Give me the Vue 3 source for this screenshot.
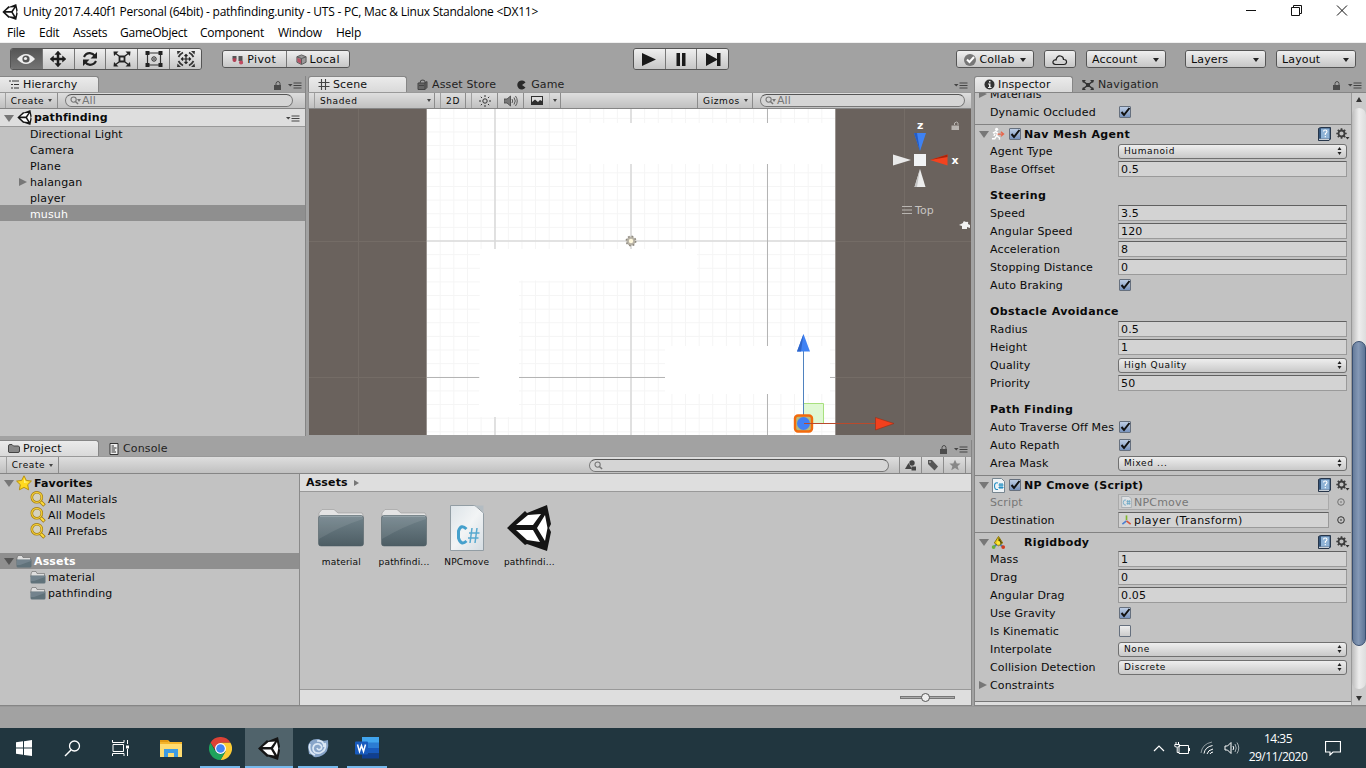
<script setup>
const menus = ['File', 'Edit', 'Assets', 'GameObject', 'Component', 'Window', 'Help']
const tools = ['eye', 'move', 'rotate', 'scale', 'rect', 'multi']
const playback = ['play', 'pause', 'step']
const hierarchy = [
  { name: 'Directional Light' },
  { name: 'Camera' },
  { name: 'Plane' },
  { name: 'halangan', expandable: true },
  { name: 'player' },
  { name: 'musuh', selected: true },
]
const favorites = ['All Materials', 'All Models', 'All Prefabs']
const folders = ['material', 'pathfinding']
const assets = [
  { name: 'material', icon: 'folder-big' },
  { name: 'pathfindi...', icon: 'folder-big' },
  { name: 'NPCmove', icon: 'cs-big' },
  { name: 'pathfindi...', icon: 'unity' },
]
const components = [
  {
    title: 'Nav Mesh Agent', icon: 'agent', check: true,
    rows: [
      { label: 'Agent Type', type: 'popup', value: 'Humanoid' },
      { label: 'Base Offset', type: 'text', value: '0.5' },
      { label: 'Steering', type: 'heading' },
      { label: 'Speed', type: 'text', value: '3.5' },
      { label: 'Angular Speed', type: 'text', value: '120' },
      { label: 'Acceleration', type: 'text', value: '8' },
      { label: 'Stopping Distance', type: 'text', value: '0' },
      { label: 'Auto Braking', type: 'check', value: true },
      { label: 'Obstacle Avoidance', type: 'heading' },
      { label: 'Radius', type: 'text', value: '0.5' },
      { label: 'Height', type: 'text', value: '1' },
      { label: 'Quality', type: 'popup', value: 'High Quality' },
      { label: 'Priority', type: 'text', value: '50' },
      { label: 'Path Finding', type: 'heading' },
      { label: 'Auto Traverse Off Mes', type: 'check', value: true },
      { label: 'Auto Repath', type: 'check', value: true },
      { label: 'Area Mask', type: 'popup', value: 'Mixed ...' },
    ],
  },
  {
    title: 'NP Cmove (Script)', icon: 'cs', check: true,
    rows: [
      { label: 'Script', type: 'object', value: 'NPCmove', icon: 'cs', disabled: true },
      { label: 'Destination', type: 'object', value: 'player (Transform)', icon: 'axes' },
    ],
  },
  {
    title: 'Rigidbody', icon: 'rigid', check: false,
    rows: [
      { label: 'Mass', type: 'text', value: '1' },
      { label: 'Drag', type: 'text', value: '0' },
      { label: 'Angular Drag', type: 'text', value: '0.05' },
      { label: 'Use Gravity', type: 'check', value: true },
      { label: 'Is Kinematic', type: 'check', value: false },
      { label: 'Interpolate', type: 'popup', value: 'None' },
      { label: 'Collision Detection', type: 'popup', value: 'Discrete' },
      { label: 'Constraints', type: 'foldout' },
    ],
  },
]
const gridStep = 13.63
const gridX = Array.from({ length: 30 }, (_, i) => 631 + (i - 14) * gridStep).filter((x) => x > 428 && x < 835)
const gridY = Array.from({ length: 24 }, (_, i) => 241 + (i - 9) * gridStep).filter((y) => y > 109 && y < 434)
</script>

<template>
  <div class="screen">
    <svg class="defs" width="0" height="0">
      <symbol id="unity" viewBox="0 0 44 46">
        <path d="M0 23 18 6 20 8 40 0 44 19 42 23 44 27 40 46 20 39 18 40Z" fill="#151515" />
        <path d="M9 20 21 10 34 9 26 20ZM9 25 26 25 33 37 20 35ZM38 10 40.500 23 38 36 30 23Z" fill="#fff" />
      </symbol>
      <symbol id="eye" viewBox="0 0 20 16">
        <path d="M1 8Q10-2 19 8Q10 18 1 8Z" fill="#eee" /><circle cx="10" cy="8" r="3.600" fill="#555" /><circle cx="9.500" cy="7.500" r="1.600" fill="#eee" />
      </symbol>
      <symbol id="move" viewBox="0 0 20 16">
        <path d="M10 0 13 3.500H11V7H14.500V5L18 8 14.500 11V9H11V12.500H13L10 16 7 12.500H9V9H5.500V11L2 8 5.500 5V7H9V3.500H7Z" fill="#1c1c1c" stroke="#1c1c1c" stroke-width=".5" />
      </symbol>
      <symbol id="rotate" viewBox="0 0 20 16">
        <path d="M4 6Q6 2 10 2.200 13 2.400 15 5M16 10Q14 13.800 10 13.800 7 13.600 5 11" fill="none" stroke="#222" stroke-width="2.200" /><path d="M17 1V7.500H10.500ZM3 15V8.500H9.500Z" fill="#222" />
      </symbol>
      <symbol id="scale" viewBox="0 0 20 16">
        <path d="M7.500 5.500H12.500V10.500H7.500Z" fill="none" stroke="#222" stroke-width="1.800" /><path d="M3 2 7 5M17 2 13 5M3 14 7 11M17 14 13 11" stroke="#222" stroke-width="1.300" />
        <path d="M1.500.500H6.500L2 5ZM18.500.500H13.500L18 5ZM1.500 15.500H6.500L2 11ZM18.500 15.500H13.500L18 11Z" fill="#222" />
      </symbol>
      <symbol id="rect" viewBox="0 0 20 16">
        <path d="M3.500 2H16.500V14H3.500Z" fill="none" stroke="#333" stroke-width="1.200" /><path d="M1.500 0h4v4h-4zM14.500 0h4v4h-4zM1.500 12h4v4h-4zM14.500 12h4v4h-4z" fill="#222" /><circle cx="10" cy="8" r="2.200" fill="none" stroke="#222" /><circle cx="10" cy="8" r=".8" />
      </symbol>
      <symbol id="multi" viewBox="0 0 20 16">
        <path d="M2.500 6Q4 3 7 1.500M13 1.500Q16 3 17.500 6M17.500 10Q16 13 13 14.500M7 14.500Q4 13 2.500 10" fill="none" stroke="#333" stroke-width="1.700" />
        <path d="M1 0h4L1.500 3.500zM19 0h-4L18.500 3.500zM1 16h4L1.500 12.500zM19 16h-4L18.500 12.500z" fill="#333" />
        <path d="M10 3.500V12.500M5.500 8H14.500M8.500 5 10 3.500 11.500 5M8.500 11 10 12.500 11.500 11M7 6.500 5.500 8 7 9.500M13 6.500 14.500 8 13 9.500" fill="none" stroke="#222" stroke-width="1.200" />
      </symbol>
      <symbol id="play" viewBox="0 0 20 16"><path d="M3 2V15L17 8.500Z" fill="#1a1a1a" /></symbol>
      <symbol id="pause" viewBox="0 0 20 16"><path d="M5.500 2H9V15H5.500ZM11 2H14.500V15H11Z" fill="#1a1a1a" /></symbol>
      <symbol id="step" viewBox="0 0 20 16"><path d="M3 2V15L14 9V15H17.500V2H14V8Z" fill="#1a1a1a" /></symbol>
      <symbol id="pivot" viewBox="0 0 12 10">
        <path d="M.500 1H4.500V4L2.500 7 .500 4Z" fill="#555" /><circle cx="2.500" cy="5" r="2" fill="#b34055" /><path d="M6.500 1H10.500V9H8V6H6.500Z" fill="#555" /><circle cx="9" cy="7.500" r="2" fill="#c34a60" />
      </symbol>
      <symbol id="cube" viewBox="0 0 12 12">
        <path d="M1 3 6 1 11 3V9L6 11.500 1 9Z" fill="#999" stroke="#555" /><path d="M1 3 6 5 11 3M6 5V11" fill="none" stroke="#555" /><path d="M1.500 4 5.500 6V10.500L1.500 8.500Z" fill="#b85265" />
      </symbol>
      <symbol id="lock" viewBox="0 0 8 9"><path d="M0 4H7V9H0Z" fill="#4b4b4b" /><path d="M2 4V2.500Q2.300.500 4 .500T6 2.500V4" fill="none" stroke="#4b4b4b" /></symbol>
      <symbol id="menu" viewBox="0 0 14 7"><path d="M0 2H4.500L2.250 4.500Z" fill="#444" /><path d="M5.500 1H13.500M5.500 3.500H13.500M5.500 6H13.500" stroke="#444" /></symbol>
      <symbol id="list" viewBox="0 0 12 9"><path d="M1 1H3M4 1H11M3 4.500H5M6 4.500H11M3 8H5M6 8H11" stroke="#333" stroke-width="1.100" /></symbol>
      <symbol id="hash" viewBox="0 0 12 11"><path d="M3.500 0V11M7.500 0V11M.500 3.500H11.500M.500 7.500H11.500" stroke="#444" stroke-width="1.100" /></symbol>
      <symbol id="bag" viewBox="0 0 12 11"><path d="M1 4H8V10.500H1ZM8 4 10 2.500V8.500L8 10.500" fill="#666" stroke="#444" /><path d="M3 4Q3 .500 6 1T8 4M2 6.500H7" fill="none" stroke="#444" /></symbol>
      <symbol id="pac" viewBox="0 0 10 10"><path d="M8.500 2.500 5 5 8.500 7.500A4.500 4.500 0 1 1 8.500 2.500Z" fill="#2a2a2a" /></symbol>
      <symbol id="info" viewBox="0 0 11 11"><circle cx="5.500" cy="5.500" r="5" fill="#333" /><path d="M5 2H6.500V3.500H5ZM4 4.500H6.500V8H7.500V9H4V8H5V5.500H4Z" fill="#eee" /></symbol>
      <symbol id="nav" viewBox="0 0 12 10"><path d="M1 1 11 9M11 1 1 9" stroke="#333" stroke-width="1.600" /><path d="M0 0H4L1 3ZM12 0H8L11 3ZM0 10H4L1 7ZM12 10H8L11 7ZM4 3H8V7H4Z" fill="#333" /></symbol>
      <symbol id="folder-tab" viewBox="0 0 12 9"><path d="M.500 8V2Q.500.500 2 .500H4L5.500 2H10Q11 2 11.500 3V7Q11.500 8.500 10 8.500H1Z" fill="#888" stroke="#444" /></symbol>
      <symbol id="doc-tab" viewBox="0 0 10 12"><path d="M1 .500H9V11.500H1Z" fill="#eee" stroke="#333" /><path d="M2.500 3H5M2.500 5H7.500M2.500 7H6M2.500 9H7" stroke="#333" /></symbol>
      <symbol id="search" viewBox="0 0 10 10"><circle cx="4" cy="4" r="2.900" fill="none" stroke="#777" stroke-width="1.200" /><path d="M6 6 9 9" stroke="#777" stroke-width="1.600" /></symbol>
      <symbol id="sun" viewBox="0 0 12 12"><circle cx="6" cy="6" r="2.200" fill="none" stroke="#333" /><path d="M6 0V2M6 10V12M0 6H2M10 6H12M1.800 1.800 3 3M9 9 10.200 10.200M1.800 10.200 3 9M9 3 10.200 1.800" stroke="#333" /></symbol>
      <symbol id="sound" viewBox="0 0 14 12"><path d="M0 4H3L6.500 1V11L3 8H0Z" fill="#777" stroke="#444" stroke-width=".8" /><path d="M8 4Q9.500 6 8 8M10 2.500Q12.500 6 10 9.500M11.500 1Q15 6 11.500 11" fill="none" stroke="#555" /></symbol>
      <symbol id="image" viewBox="0 0 12 9"><path d="M0 0H12V9H0Z" fill="#2f2f2f" /><path d="M1 1H11V5L9 4 7 6 4 3.500 1 6Z" fill="#ddd" /></symbol>
      <symbol id="star" viewBox="0 0 16 16"><path d="M8 .800 10.300 5.400 15.400 6.100 11.700 9.700 12.600 14.800 8 12.400 3.400 14.800 4.300 9.700 .600 6.100 5.700 5.400Z" fill="#ffd91f" stroke="#b58a00" stroke-width=".9" /><path d="M8 3 9.500 6.500 13 7 8 8Z" fill="#fff27c" /></symbol>
      <symbol id="lens" viewBox="0 0 16 16"><path d="M10 10 14.500 14.500" stroke="#a07a10" stroke-width="3.600" /><path d="M10 10 14 14" stroke="#ffdc3c" stroke-width="2" /><circle cx="6.800" cy="6.300" r="5" fill="#d5d2bf" stroke="#a07a10" stroke-width="2.600" /><circle cx="6.800" cy="6.300" r="5" fill="none" stroke="#f2cd35" stroke-width="1.300" /></symbol>
      <symbol id="folder" viewBox="0 0 16 13">
        <path d="M1 3 2 .500H6L7 2.500H14.500V6H1Z" fill="#dedede" stroke="#666" stroke-width=".6" /><path d="M.500 4.500H15.500V11Q15.500 12.500 14 12.500H2Q.500 12.500.500 11Z" fill="#60727a" /><path d="M1 5H15V6L4 10H1Z" fill="#80909a" opacity=".6" />
      </symbol>
      <linearGradient id="fold" x1="0" y1="0" x2="0" y2="1"><stop offset="0" stop-color="#71838b" /><stop offset="1" stop-color="#4d5d64" /></linearGradient>
      <symbol id="folder-big" viewBox="0 0 46 46">
        <path d="M1 13V8L4 4.500H16L20 8H44L45 10V14Z" fill="#e4e4e4" stroke="#999" stroke-width=".6" /><rect x=".500" y="10.500" width="45" height="30.500" rx="2.500" fill="url(#fold)" stroke="#4b5a60" stroke-width=".5" /><path d="M1 15V13Q1 11 3 11H45V14Q23 21 1 34Z" fill="#fff" opacity=".09" /><path d="M2 11.500H44" stroke="#94a2a8" />
      </symbol>
      <linearGradient id="paper" x1="0" y1="0" x2="1" y2="1"><stop offset="0" stop-color="#dce3e8" /><stop offset=".5" stop-color="#f2f4f5" /><stop offset="1" stop-color="#d4dce2" /></linearGradient>
      <symbol id="cs-big" viewBox="0 0 46 46">
        <path d="M6.500 .500H31L39.500 8V45.500H6.500Z" fill="url(#paper)" stroke="#929da4" /><path d="M29 .500Q36 2 39.500 9V.500Z" fill="#b3bcc2" />
        <path d="M22.500 24Q17 18.500 14.500 26V33Q17 41 22.500 36" fill="none" stroke="#45a0cc" stroke-width="3" /><path d="M28 23 26 38M33 23 31 38M25 28H35.500M24 33H34.500" stroke="#58a9cf" stroke-width="1.500" />
      </symbol>
      <symbol id="cs" viewBox="0 0 13 15"><path d="M.500 .500H9.500L12.500 3.500V14.500H.500Z" fill="#eef3f6" stroke="#778690" /><path d="M6 5Q2.500 4 2.500 8T6 11.500M8 5V11M10 5V11M6.500 7H11.500M6.500 9.500H11.500" fill="none" stroke="#258fc4" stroke-width="1.100" /></symbol>
      <symbol id="agent" viewBox="0 0 16 15"><circle cx="6" cy="2" r="1.700" fill="#fff" /><path d="M2 6 5 4.500 7 6 6 9 9 11V13M6 9 4 12H1M4.500 6.500 3 9" fill="none" stroke="#fff" stroke-width="1.500" /><path d="M7 7H13M10.500 4.500 13.500 7 10.500 9.500" fill="none" stroke="#e8654a" stroke-width="1.300" /></symbol>
      <symbol id="rigid" viewBox="0 0 16 15"><path d="M3 12 8 8 12.500 12" fill="none" stroke="#4a7fb8" stroke-width="2" /><path d="M8 1 12.500 8 8 11 3.500 8Z" fill="#e8ca1c" stroke="#87740c" /><path d="M8 2V10L12 8Z" fill="#51470a" /><circle cx="8" cy="8" r="2" fill="#ffe838" /><circle cx="2.800" cy="12.300" r="2" fill="#6bb03a" /><circle cx="13" cy="12.300" r="2" fill="#d23b20" /></symbol>
      <symbol id="axes" viewBox="0 0 12 12"><path d="M6 6V1" stroke="#7fb52c" stroke-width="1.800" /><path d="M6 7 1.500 10.500" stroke="#4b7fd0" stroke-width="1.800" /><path d="M6 7 10.500 10.500" stroke="#d9553c" stroke-width="1.800" /></symbol>
      <symbol id="book" viewBox="0 0 13 14"><path d="M.500 1.500 2.500.500H12.500V12L11 13.500H.500Z" fill="#34557b" stroke="#27364a" /><path d="M3 1.500H11.500V11.500H3Z" fill="#8fb3d6" /><path d="M5.500 4.500Q5.500 3 7.200 3T9 4.600Q9 5.500 7.300 6.800V8M7.300 9V10.300" fill="none" stroke="#fff" stroke-width="1.100" /><path d="M1 12.300H11" stroke="#eee" /></symbol>
      <symbol id="gear" viewBox="0 0 14 13"><circle cx="5.500" cy="5.500" r="3" fill="none" stroke="#3d3d3d" stroke-width="1.800" /><path d="M5.500 .300V2.500M5.500 8.500V10.700M.300 5.500H2.500M8.500 5.500H10.700M1.800 1.800 3.300 3.300M7.700 7.700 9.200 9.200M1.800 9.200 3.300 7.700M7.700 3.300 9.200 1.800" stroke="#3d3d3d" stroke-width="1.700" /><path d="M9.500 9H13.500L11.500 11.500Z" fill="#333" /></symbol>
    </svg>

    <header class="titlebar">
      <div class="title-row">
        <svg class="logo"><use href="#unity" /></svg>
        <span class="window-title">Unity 2017.4.40f1 Personal (64bit) - pathfinding.unity - UTS - PC, Mac &amp; Linux Standalone &lt;DX11&gt;</span>
        <svg class="window-buttons" width="104" height="14" viewBox="0 0 104 14" fill="none" stroke="#111">
          <path d="M0 7.500H10M45.500 4.500H53.500V12.500H45.500ZM47.500 4V2.500H55.500V10.500H54M91 2.500 101 12.500M101 2.500 91 12.500" />
        </svg>
      </div>
      <nav class="menu-row"><span v-for="m in menus" :key="m" :class="'m-' + m.toLowerCase()">{{ m }}</span></nav>
    </header>

    <div class="main-toolbar">
      <div class="group tools">
        <span v-for="t in tools" :key="t" class="btn" :class="{ active: t === 'eye' }"><svg width="20" height="16"><use :href="'#' + t" /></svg></span>
      </div>
      <div class="group short pivot">
        <span class="btn"><svg width="12" height="10"><use href="#pivot" /></svg>Pivot</span>
        <span class="btn"><svg width="11" height="11"><use href="#cube" /></svg>Local</span>
      </div>
      <div class="group playback">
        <span v-for="p in playback" :key="p" class="btn"><svg width="20" height="16"><use :href="'#' + p" /></svg></span>
      </div>
      <div class="group short collab"><span class="btn"><svg width="12" height="12" viewBox="0 0 12 12"><circle cx="6" cy="6" r="6" fill="#777" /><path d="M3 5.500 5.500 8 10 3" fill="none" stroke="#fff" stroke-width="2" /></svg>Collab<i class="arrow"></i></span></div>
      <div class="group short cloud"><span class="btn"><svg width="16" height="12" viewBox="0 0 16 12"><path d="M3.500 10.500Q.500 10 1 7.500 2 5.500 4 6 5 1.500 8.500 2 11.500 2.500 11.500 5.500 15 5.500 14.500 8.500 14 10.500 12 10.500Z" fill="none" stroke="#222" stroke-width="1.200" /></svg></span></div>
      <div class="group short account"><span class="btn wide">Account<i class="arrow"></i></span></div>
      <div class="group short layers"><span class="btn wide">Layers<i class="arrow"></i></span></div>
      <div class="group short layout"><span class="btn wide">Layout<i class="arrow"></i></span></div>
    </div>

    <main class="workspace">
      <div class="left">
        <div class="upper">
          <section class="panel hierarchy">
            <div class="tabs">
              <span class="tab on first"><svg width="12" height="9"><use href="#list" /></svg>Hierarchy</span>
              <span class="tab-tools"><svg width="8" height="9"><use href="#lock" /></svg><svg width="14" height="7"><use href="#menu" /></svg></span>
            </div>
            <div class="bar">
              <span class="bar-btn create">Create<i class="arrow tiny"></i></span>
              <span class="search hsearch"><svg width="9" height="9"><use href="#search" /></svg><i class="arrow tiny"></i>All</span>
            </div>
            <div class="scene-row"><i class="tri down"></i><svg width="15" height="15"><use href="#unity" /></svg><b>pathfinding</b><svg class="row-menu" width="14" height="7"><use href="#menu" /></svg></div>
            <div class="tree">
              <div v-for="h in hierarchy" :key="h.name" class="node" :class="{ selected: h.selected }"><i v-if="h.expandable" class="tri right"></i><span class="name">{{ h.name }}</span></div>
            </div>
          </section>

          <section class="panel scene">
            <div class="tabs">
              <span class="tab on"><svg width="12" height="11"><use href="#hash" /></svg>Scene</span>
              <span class="tab store"><svg width="12" height="11"><use href="#bag" /></svg>Asset Store</span>
              <span class="tab game"><svg width="10" height="10"><use href="#pac" /></svg>Game</span>
              <span class="tab-tools"><svg width="14" height="7"><use href="#menu" /></svg></span>
            </div>
            <div class="bar scene-bar">
              <span class="bar-btn shaded">Shaded<i class="arrow tiny"></i></span>
              <span class="bar-btn two-d">2D</span>
              <span class="bar-btn ico light"><svg width="12" height="12"><use href="#sun" /></svg></span>
              <span class="bar-btn ico"><svg width="14" height="12"><use href="#sound" /></svg></span>
              <span class="bar-btn ico"><svg width="12" height="9"><use href="#image" /></svg></span>
              <span class="bar-btn more"><i class="arrow tiny"></i></span>
              <span class="bar-btn gizmos">Gizmos<i class="arrow tiny"></i></span>
              <span class="search ssearch"><svg width="9" height="9"><use href="#search" /></svg><i class="arrow tiny"></i>All</span>
            </div>
            <svg class="view" width="662" height="326" viewBox="309 109 662 326">
              <rect x="309" y="109" width="662" height="326" fill="#6a625d" />
              <path d="M358.500 109V435M904.500 109V435M309 241.500H971M309 377.500H971" stroke="#746c66" />
              <rect x="427" y="109" width="408" height="326" fill="#fff" />
              <g stroke="#f5f5f5"><line v-for="x in gridX" :key="'x' + x" :x1="x" :x2="x" y1="109" y2="435" /><line v-for="y in gridY" :key="'y' + y" x1="427" x2="835" :y1="y" :y2="y" /></g>
              <path d="M495 109V435M631 109V435M427 241H835" stroke="#dadada" stroke-width="1.600" />
              <path d="M767.500 109V435M427 377.500H835" stroke="#b4b4b4" />
              <path d="M577 123H835V164H577ZM480 249H697V280.500H519V417H479ZM665 346H830V394H665Z" fill="#fff" />
              <path d="M426.500 109V435M835.500 109V435" stroke="#99938f" />
              <g><circle cx="631" cy="241" r="4.500" fill="#b8b3a7" /><circle cx="631" cy="241" r="4.700" fill="none" stroke="#8f8a80" stroke-width="1.500" stroke-dasharray="1.800 1.890" /><circle cx="631" cy="241" r="2.200" fill="#fff8dc" /></g>
              <path d="M803.500 423.500V403.500H823.500V423.500Z" fill="#dff8d3" stroke="#a8e07e" />
              <path d="M803.500 418V351" stroke="#4f82bf" />
              <path d="M797 351.500 803.500 334 810 351.500Z" fill="#3f82f4" /><path d="M797 351.500 803.500 334 801 351.500Z" fill="#2d64c9" />
              <rect x="795" y="415.500" width="17" height="16" rx="3" fill="#b8b779" stroke="#f26a0c" stroke-width="2.400" /><circle cx="803.500" cy="423.500" r="6.500" fill="#4280f3" />
              <path d="M804 423.500H876" stroke="#b94a2c" /><path d="M875.500 417.500 894 423.500 875.500 430Z" fill="#f3401d" stroke="#9c2b13" stroke-width=".6" />
              <g><path d="M914 133H926L920 151Z" fill="#3e82f3" /><path d="M914 133H917L920 151Z" fill="#235bc4" /><path d="M893 154.500V165.500L911 160Z" fill="#e9e9e9" /><path d="M947.500 154.500V165.500L930 160Z" fill="#f3431f" /><path d="M947.500 154.500V157L930 160Z" fill="#a9250c" /><path d="M914.500 187H925.500L920 169Z" fill="#ececec" /><path d="M914.500 187H917L920 169Z" fill="#c4c4c4" /><rect x="914" y="154" width="12" height="12" fill="#f1f3f5" /></g>
              <text x="917" y="128.500" class="axis">z</text><text x="951.500" y="163.500" class="axis">x</text>
              <path d="M951.500 125.500H959V130H951.500Z" fill="#b8b4b0" /><path d="M954.500 125V123Q957 121 958 123V125" fill="none" stroke="#b8b4b0" />
              <path d="M902 206.500H912M902 210H912M902 213.500H912" stroke="#b9b5b1" /><text x="915" y="214" class="top-label">Top</text>
              <path d="M959 225 963 223Q963 220 966 222 969 221 968 224L970 225V228L967 227V229H962V226Z" fill="#f2f2f2" />
            </svg>
          </section>
        </div>

        <section class="panel project">
          <div class="tabs">
            <span class="tab on first proj"><svg width="12" height="9"><use href="#folder-tab" /></svg>Project</span>
            <span class="tab console"><svg width="10" height="12"><use href="#doc-tab" /></svg>Console</span>
            <span class="tab-tools"><svg width="8" height="9"><use href="#lock" /></svg><svg width="14" height="7"><use href="#menu" /></svg></span>
          </div>
          <div class="bar project-bar">
            <span class="bar-btn create">Create<i class="arrow tiny"></i></span>
            <span class="search psearch"><svg width="9" height="9"><use href="#search" /></svg></span>
            <span class="filter"><svg width="11" height="11" viewBox="0 0 11 11"><path d="M0 9 3.500 3 7 9Z" fill="#444" /><circle cx="7" cy="3" r="2.700" fill="#444" /><path d="M6.500 6.500H11V10.500H6.500Z" fill="#444" /></svg></span>
            <span class="filter"><svg width="12" height="12" viewBox="0 0 12 12"><path d="M1 1H5L11 7.500 7.500 11.500 1 5Z" fill="#555" /><circle cx="3" cy="3" r=".8" fill="#ddd" /></svg></span>
            <span class="filter"><svg width="12" height="12" viewBox="0 0 16 16"><path d="M8 1 10.300 6H15.400L11.500 9.500 13 15 8 12 3 15 4.500 9.500 .600 6H5.700Z" fill="#888" /></svg></span>
            <span class="filter last"></span>
          </div>
          <div class="project-body">
            <div class="project-tree">
              <div class="node root"><i class="tri down"></i><svg width="16" height="16"><use href="#star" /></svg><b>Favorites</b></div>
              <div v-for="f in favorites" :key="f" class="node child"><svg width="16" height="16"><use href="#lens" /></svg><span>{{ f }}</span></div>
              <div class="node root selected assets-node"><i class="tri down"></i><svg width="16" height="13"><use href="#folder" /></svg><b>Assets</b></div>
              <div v-for="f in folders" :key="f" class="node child"><svg width="16" height="13"><use href="#folder" /></svg><span>{{ f }}</span></div>
            </div>
            <div class="browser">
              <div class="crumb"><b>Assets</b><i class="tri right small"></i></div>
              <div class="asset-grid">
                <div v-for="(a, i) in assets" :key="i" class="asset"><svg width="46" height="46"><use :href="'#' + a.icon" /></svg><span>{{ a.name }}</span></div>
              </div>
              <div class="browser-foot"><span class="slider"><i></i></span></div>
            </div>
          </div>
        </section>
      </div>

      <section class="panel inspector">
        <div class="tabs">
          <span class="tab on"><svg width="11" height="11"><use href="#info" /></svg>Inspector</span>
          <span class="tab navi"><svg width="12" height="10"><use href="#nav" /></svg>Navigation</span>
          <span class="tab-tools"><svg width="8" height="9"><use href="#lock" /></svg><svg width="14" height="7"><use href="#menu" /></svg></span>
        </div>
        <div class="inspector-body">
          <div class="props">
            <div class="pre">
              <div class="prop"><i class="tri right"></i><label>Materials</label></div>
              <div class="prop"><label>Dynamic Occluded</label><span class="check on"><svg width="12" height="12" viewBox="0 0 12 12"><path d="M2.500 6 5 9 10.500 2" /></svg></span></div>
            </div>
            <div v-for="c in components" :key="c.title" class="component">
              <div class="comp-head">
                <i class="tri down"></i><svg width="15" height="15"><use :href="'#' + c.icon" /></svg>
                <span class="check-slot"><span v-if="c.check" class="check on"><svg width="12" height="12" viewBox="0 0 12 12"><path d="M2.500 6 5 9 10.500 2" /></svg></span></span>
                <b>{{ c.title }}</b><svg class="book" width="13" height="14"><use href="#book" /></svg><svg width="14" height="13"><use href="#gear" /></svg>
              </div>
              <div v-for="r in c.rows" :key="r.label" class="prop" :class="{ heading: r.type === 'heading', disabled: r.disabled }">
                <i v-if="r.type === 'foldout'" class="tri right"></i>
                <label>{{ r.label }}</label>
                <span v-if="r.type === 'text'" class="field">{{ r.value }}</span>
                <span v-else-if="r.type === 'popup'" class="popup">{{ r.value }}<svg width="5" height="8" viewBox="0 0 5 8"><path d="M.500 3 2.500 0 4.500 3ZM.500 5 2.500 8 4.500 5Z" fill="#222" /></svg></span>
                <span v-else-if="r.type === 'check'" class="check" :class="{ on: r.value }"><svg v-if="r.value" width="12" height="12" viewBox="0 0 12 12"><path d="M2.500 6 5 9 10.500 2" /></svg></span>
                <template v-else-if="r.type === 'object'">
                  <span class="field object-field"><svg width="11" height="12"><use :href="'#' + r.icon" /></svg>{{ r.value }}</span>
                  <svg class="picker" width="8" height="8" viewBox="0 0 8 8"><circle cx="4" cy="4" r="3.300" fill="none" stroke="#333" /><circle cx="4" cy="4" r=".8" fill="#222" /></svg>
                </template>
              </div>
            </div>
            <div class="next-component"></div>
          </div>
          <div class="scrollbar"><i class="up"></i><div class="track"><div class="thumb"></div></div><i class="down-arrow"></i></div>
        </div>
      </section>
    </main>
    <div class="status"></div>

    <footer class="taskbar">
      <span class="task start"><svg width="16" height="16" viewBox="0 0 16 16"><path d="M0 2.300 7 1.300V7.600H0ZM8 1.200 16 0V7.600H8ZM0 8.500H7V14.700L0 13.700ZM8 8.500H16V16L8 14.900Z" fill="#fff" /></svg></span>
      <span class="task"><svg width="17" height="17" viewBox="0 0 17 17"><circle cx="10.500" cy="6" r="5" fill="none" stroke="#fff" stroke-width="1.300" /><path d="M7 10 1 16" stroke="#fff" stroke-width="1.400" /></svg></span>
      <span class="task"><svg width="17" height="16" viewBox="0 0 17 16" fill="none" stroke="#fff"><path d="M1 4.500H11.500V11.500H1ZM.500 0V2.500H12V0M.500 16V13.500H12V16M15.500 0V4M15.500 9V16" /><path d="M14 5.500H17V8.500H14Z" fill="#fff" stroke="none" /></svg></span>
      <span class="task files"><svg width="22" height="19" viewBox="0 0 22 19"><path d="M0 1H8L10 3H22V18H0Z" fill="#f5b52c" /><path d="M0 5H22V18H0Z" fill="#ffdc71" /><path d="M4 10H18V18H14V14H8V18H4Z" fill="#3e9be3" /><path d="M0 1H8V3H0Z" fill="#e49b14" /></svg></span>
      <span class="task chrome open"><svg width="23" height="23" viewBox="0 0 24 24"><path d="M12 6H22.400A12 12 0 0 0 1.600 6L7 14Z" fill="#dc4236" /><path d="M12 6H22.400A12 12 0 0 1 12 24L17.200 15Z" fill="#fccc35" /><path d="M6.800 15 12 18 17.200 15 12 24A12 12 0 0 1 1.600 6Z" fill="#1ea35c" /><circle cx="12" cy="12" r="5.700" fill="#fff" /><circle cx="12" cy="12" r="4.500" fill="#4285f4" /></svg></span>
      <span class="task unity-task open"><svg width="22" height="23"><use href="#unity" /></svg></span>
      <span class="task mono open"><svg width="23" height="21" viewBox="0 0 23 21"><path d="M1 9Q2 0 12 1 15 4 21 2 22 8 20 13 15 20 7 19 5 16 2 16Z" fill="#88a5c9" /><path d="M18 5Q20 12 13 15 6 16 6 10 7 5 12 6 16 8 14 11 11 13 10 10M3 6Q1 14 8 17M10 3Q17 2 17 9" fill="none" stroke="#dbe8f5" stroke-width="1.700" /></svg></span>
      <span class="task word open"><svg width="25" height="22" viewBox="0 0 25 22"><path d="M7 0H24V6H7Z" fill="#41a5ee" /><path d="M7 5.500H24V11H7Z" fill="#2b7cd3" /><path d="M7 11H24V16.500H7Z" fill="#185abd" /><path d="M7 16.500H24V21.500H7Z" fill="#103f91" /><rect y="4.500" width="13" height="13" rx="1" fill="#185abd" /><path d="M2.500 7.500 4.500 14.500 6.500 8.500 8.500 14.500 10.500 7.500" fill="none" stroke="#fff" stroke-width="1.500" /></svg></span>
      <span class="tray">
        <svg width="12" height="8" viewBox="0 0 12 8"><path d="M1 7 6 2 11 7" fill="none" stroke="#fff" stroke-width="1.200" /></svg>
        <svg width="17" height="14" viewBox="0 0 17 14" fill="none" stroke="#fff"><path d="M5 4.500H14.500V12.500H5ZM15.500 7V10" /><path d="M2 1V3M4.500 1V3M.800 3.500H5.500V5.500Q3.300 7 .800 5.500ZM3.200 6.500V11.500H5" /></svg>
        <svg width="15" height="14" viewBox="0 0 15 14" fill="none" stroke="#fff"><path d="M1 12Q2 3 12 1" opacity=".5" /><path d="M4 12.500Q5 6 12.500 4.500M7 13Q8 9 13 8M10 13Q10.500 11.500 13 11" /></svg>
        <svg width="16" height="14" viewBox="0 0 16 14" fill="none" stroke="#fff"><path d="M1 5H3.500L7 1.500V12.500L3.500 9H1ZM9 5Q10.500 7 9 9" /><path d="M11 3Q13.500 7 11 11M13 1.500Q16.500 7 13 12.500" opacity=".6" /></svg>
      </span>
      <span class="clock"><span>14:35</span><span>29/11/2020</span></span>
      <svg class="notice" width="16" height="16" viewBox="0 0 16 16"><path d="M.500 1.500H15.500V12H8L5 15V12H.500Z" fill="none" stroke="#fff" stroke-width="1.200" /></svg>
    </footer>
  </div>
</template>

<style>
html, body { margin: 0; overflow: hidden; }
</style>

<style scoped>
* { box-sizing: border-box; }
.screen { width: 1366px; height: 768px; display: flex; flex-direction: column; overflow: hidden; background: #a2a2a2; font: 11px/16px "DejaVu Sans", Verdana, sans-serif; letter-spacing: .14px; color: #0a0a0a; white-space: pre; }
.defs { position: absolute; }
svg { flex: none; }
i { flex: none; }
.titlebar { height: 43px; flex: none; background: #fff; border-bottom: 1px solid #f0f0f0; font-family: "Open Sans", "Noto Sans", sans-serif; font-size: 12px; letter-spacing: -.24px; color: #000; }
.title-row { display: flex; align-items: center; height: 23px; padding: 0 16px 0 2px; }
.logo { width: 16px; height: 16px; margin-right: 5px; }
.window-buttons { margin: -4px 0 0 auto; }
.menu-row { display: flex; height: 19px; align-items: center; padding-left: 7px; }
.menu-row span { flex: none; }
.m-file { width: 32px; } .m-edit { width: 34px; } .m-assets { width: 47px; } .m-gameobject { width: 80px; } .m-component { width: 78px; } .m-window { width: 58px; }

.main-toolbar { height: 33px; flex: none; display: flex; align-items: flex-start; padding: 5px 0 0 10px; }
.group { display: flex; flex: none; height: 22px; border: 1px solid #555; border-radius: 3px; overflow: hidden; }
.group.short { height: 18px; margin-top: 2px; }
.btn { flex: 1; display: flex; align-items: center; justify-content: center; gap: 3px; background: linear-gradient(#efefef, #c6c6c6); border-right: 1px solid #777; }
.short .btn { padding-top: 1px; }
.btn:last-child { border-right: 0; }
.btn.active { background: linear-gradient(#555, #747474); }
.btn.wide { justify-content: space-between; padding: 1px 6px 0 5px; }
.tools { width: 192px; } .pivot { width: 128px; margin-left: 20px; } .playback { width: 96px; margin-left: 283px; }
.pivot .btn { letter-spacing: .35px; }
.collab { width: 78px; margin-left: 227px; } .collab .arrow { margin-left: 2px; } .cloud { width: 32px; margin-left: 10px; } .account { width: 80px; margin-left: 10px; }
.layers { width: 81px; margin-left: 19px; } .layout { width: 80px; margin-left: 10px; }
.arrow { display: inline-block; width: 0; height: 0; border: 3px solid transparent; border-top: 4px solid #222; border-bottom: 0; }
.arrow.tiny { border-width: 3px 2.500px 0; border-top-color: #444; }

.workspace { flex: 1; min-height: 0; display: flex; }
.left { width: 972px; display: flex; flex-direction: column; gap: 4px; }
.upper { display: flex; height: 360px; gap: 2px; }
.panel { display: flex; flex-direction: column; }
.hierarchy { width: 306px; border-right: 1px solid #858585; background: #c2c2c2; }
.scene { width: 663px; }
.project { height: 266px; background: #c2c2c2; border-right: 1px solid #858585; }
.tabs { height: 16px; flex: none; display: flex; background: #a2a2a2; }
.tab { display: flex; align-items: center; gap: 3px; padding: 1px 0 0 9px; color: #222; }
.tab.on { width: 99px; border: 1px solid #868686; border-bottom: 0; border-radius: 3px 3px 0 0; background: linear-gradient(#ebebeb, #d9d9d9); color: #111; padding-top: 0; }
.tab.first { border-left: 0; border-top-left-radius: 0; padding-left: 8px; }
.tab.store { padding-left: 10px; } .tab.game { padding-left: 21px; gap: 4px; } .tab.console { padding-left: 10px; gap: 4px; } .tab.navi { padding-left: 9px; gap: 4px; }
.tab-tools { margin: 3px 3px 0 auto; display: flex; align-items: center; gap: 6px; }
.inspector .tab-tools { gap: 7px; margin-right: 4px; }
.bar { height: 17px; flex: none; display: flex; align-items: center; background: linear-gradient(#dedede, #c0c0c0); border-top: 1px solid #999; border-bottom: 1px solid #858585; font-size: 9px; letter-spacing: .6px; }
.bar > * { flex: none; }
.bar-btn { display: flex; align-items: center; justify-content: center; align-self: stretch; border-right: 1px solid #8c8c8c; }
.create { margin-left: 5px; width: 53px; border-left: 1px solid #a0a0a0; gap: 4px; }
.search { display: flex; align-items: center; height: 13px; border: 1px solid #777; border-top-color: #555; border-radius: 7px; background: #d5d5d5; color: #777; font-size: 11px; letter-spacing: .1px; padding-left: 4px; line-height: 11px; }
.search .arrow { border-top-color: #777; margin-right: 1px; margin-left: -2px; }
.hsearch { width: 228px; margin-left: 7px; }
.scene-row { height: 18px; flex: none; background: #dedede; border-bottom: 1px solid #999; display: flex; align-items: center; padding: 1px 5px 0 4px; }
.scene-row svg:not(.row-menu) { margin: -1px 2px 0; }
.row-menu { margin-left: auto; }
.tri { width: 0; height: 0; display: inline-block; border: 0 solid transparent; }
.tri.down { border-width: 7px 5px 0; border-top-color: #777; margin-right: 1px; }
.tri.right { border-width: 4.500px 0 4.500px 8px; border-left-color: #777; }
.tri.small { border-width: 3px 0 3px 5px; }
.tree { margin-top: -2px; }
.node { height: 16px; display: flex; align-items: center; }
.tree .node { padding-left: 30px; }
.tree .name { padding-top: 3px; }
.tree .tri { margin-left: -11px; margin-right: 3px; margin-top: 1px; }
.node.selected { background: #8f8f8f; color: #fff; }

.scene-bar { border-left: 1px solid #999; }
.shaded { width: 121px; margin-left: 5px; border-left: 1px solid #a0a0a0; justify-content: space-between; padding: 0 3px 0 5px; }
.two-d { width: 26px; margin-left: 5px; border-left: 1px solid #a0a0a0; }
.ico { width: 26px; } .light { width: 27px; margin-left: 5px; border-left: 1px solid #a0a0a0; }
.more { width: 11px; } .ico:has(+ .more) { border-color: #bbb; }
.gizmos { width: 56px; margin-left: 136px; border-left: 1px solid #8c8c8c; gap: 4px; padding-left: 1px; }
.ssearch { width: 205px; margin-left: 7px; }
.view { display: block; margin-left: 1px; }
.axis { font: bold 11px "DejaVu Sans", sans-serif; fill: #fff; }
.top-label { font: 11px "DejaVu Sans", sans-serif; fill: #c7c4c1; }

.project-bar { height: 18px; }
.project-bar .create { margin-left: 6px; }
.psearch { width: 300px; margin-left: 530px; }
.filter { width: 22px; align-self: stretch; display: flex; align-items: center; justify-content: center; border-left: 1px solid #8c8c8c; }
.psearch + .filter { margin-left: 10px; }
.filter.last { width: 6px; }
.project-body { flex: 1; min-height: 0; display: flex; border-bottom: 1px solid #858585; }
.project-tree { width: 300px; border-right: 1px solid #8a8a8a; padding-top: 1px; }
.node.root { padding-left: 4px; } .node.root svg { margin: 0 2px 0 1px; } .node.root b { padding-top: 1px; }
.node.child { padding-left: 30px; gap: 2px; }
.node.child span { padding-top: 2px; }
.assets-node { margin-top: 14px; }
.node.selected .tri { border-top-color: #555; }
.browser { flex: 1; display: flex; flex-direction: column; }
.crumb { height: 18px; flex: none; display: flex; align-items: center; gap: 6px; background: #dedede; border-bottom: 1px solid #999; padding: 1px 0 0 6px; }
.asset-grid { flex: 1; display: flex; padding: 13px 0 0 10px; }
.asset { width: 62.700px; display: flex; flex-direction: column; align-items: center; font-size: 9px; letter-spacing: .2px; }
.asset span { margin-top: 3px; }
.browser-foot { height: 16px; flex: none; background: #dedede; border-top: 1px solid #999; display: flex; justify-content: flex-end; align-items: center; padding-right: 16px; }
.slider { width: 55px; height: 3px; border: 1px solid #777; background: #aaa; display: flex; align-items: center; justify-content: center; }
.slider i { width: 9px; height: 9px; border-radius: 50%; background: #eee; border: 1px solid #555; margin-right: 4px; }

.inspector { width: 392px; margin-left: 2px; }
.inspector-body { flex: 1; min-height: 0; display: flex; border: 1px solid #858585; border-right: 0; background: #c2c2c2; }
.props { width: 376px; overflow: hidden; }
.pre { height: 31px; overflow: hidden; }
.pre .prop:first-child { margin-top: -8px; }
.prop { height: 18px; display: flex; align-items: center; padding-left: 15px; }
.prop label { width: 128px; flex: none; padding-top: 1px; }
.prop > .tri { margin: 0 3px 0 -11px; }
.prop.heading { margin-top: 8px; font-weight: bold; letter-spacing: .4px; }
.component { border-top: 1px solid #828282; padding-bottom: 3px; }
.component:nth-child(4) { padding-bottom: 7px; }
.comp-head { height: 17px; display: flex; align-items: center; padding: 2px 1px 0 4px; }
.comp-head b { padding-top: 1px; letter-spacing: .35px; }
.comp-head > .tri + svg { margin-left: 1px; }
.check-slot { width: 12px; height: 12px; margin: -2px 3px 0 3px; display: flex; }
.check-slot .check { margin: 0; }
.book { margin: -2px 5px 0 auto; }
.field { width: 229px; height: 16px; flex: none; border: 1px solid #9a9a9a; border-top-color: #606060; background: #d3d3d3; padding-left: 2px; line-height: 13px; display: flex; align-items: center; }
.popup { width: 229px; height: 15px; flex: none; border: 1px solid #707070; border-radius: 3px; background: linear-gradient(#eee, #c9c9c9); display: flex; align-items: center; justify-content: space-between; padding: 0 4px 0 5px; font-size: 9px; letter-spacing: .6px; }
.check { width: 12px; height: 12px; flex: none; margin-left: 1px; border: 1px solid #66707e; border-radius: 1px; background: linear-gradient(#ededed, #ccc); display: flex; }
.check.on { background: linear-gradient(#bdcde4, #7893bd); }
.check svg { margin: -1px; }
.check path { fill: none; stroke: #111; stroke-width: 2; }
.object-field { width: 211px; gap: 2px; letter-spacing: .4px; }
.picker { margin-left: 8px; }
.disabled { color: #777; }
.disabled .field { background: #cacaca; border-color: #aaa; letter-spacing: .2px; }
.disabled svg { opacity: .55; }
.next-component { border-top: 1px solid #777; height: 6px; background: #dedede; }
.scrollbar { width: 15px; border-left: 1px solid #999; display: flex; flex-direction: column; align-items: center; background: #cacaca; }
.up { border: 3.500px solid transparent; border-top: 0; border-bottom: 5px solid #333; margin: 4px 0 6px; }
.down-arrow { border: 3.500px solid transparent; border-bottom: 0; border-top: 5px solid #333; margin: 7px 0 4px; }
.track { width: 14px; flex: 1; border-radius: 7px; background: linear-gradient(90deg, #bbb, #ededed 50%, #ddd); padding-top: 233px; }
.thumb { height: 305px; border-radius: 7px; border: 1px solid #394f70; background: linear-gradient(90deg, #667c9b, #8498b5 45%, #5e7596); }
.status { height: 22px; flex: none; border-top: 1px solid #999; }

.taskbar { height: 40px; flex: none; display: flex; background: #21363f; color: #fff; font: 12px/18px "Open Sans", "Noto Sans", sans-serif; letter-spacing: -.5px; }
.task { width: 48px; display: flex; align-items: center; justify-content: center; }
.task.open { border-bottom: 2px solid #76b9ed; padding-top: 2px; }
.files { width: 54px; } .chrome { width: 40px; margin-left: 2px; } .unity-task { width: 48px; margin-left: 5px; background: #50636b; } .mono { width: 40px; margin-left: 5px; } .word { width: 40px; margin-left: 9px; }
.tray { margin-left: auto; display: flex; align-items: center; gap: 9px; }
.clock { width: 72px; margin-left: 2px; display: flex; flex-direction: column; align-items: center; padding-top: 2px; }
.notice { margin: 12px 25px 0 11px; }
</style>
